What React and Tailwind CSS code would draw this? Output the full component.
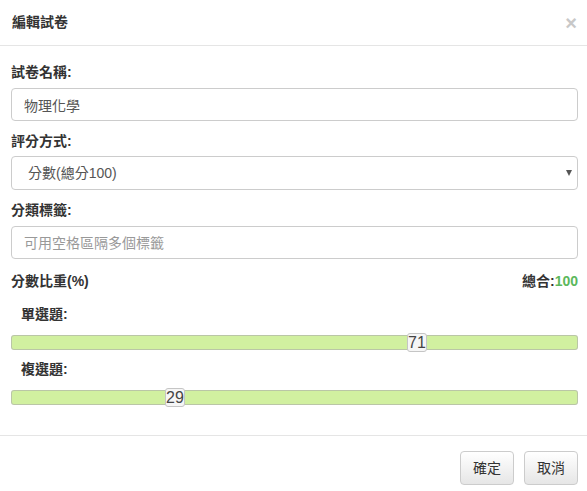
import { useState } from 'react';

const font = { fontFamily: '"Liberation Sans", Arial, "Noto Sans CJK TC", sans-serif' };

function Slider({ label, value, left }) {
  return (
    <div>
      <div className="pl-[10px] h-[20px] text-[14px] font-bold text-[#333] leading-[20px]">{label}:</div>
      <div className="relative mt-[11px] h-[15px] rounded-[3px] border border-[#aaa]/60 bg-[#d1f0a0]">
        <div
          className="absolute top-[-3px] h-[19px] w-[20px] rounded-[3px] border border-[#c5c5c5] bg-[#f6f6f6] text-center text-[16px] leading-[18px] text-[#454545]"
          style={{ left }}
        >
          {value}
        </div>
      </div>
    </div>
  );
}

export default function App() {
  const [name, setName] = useState('物理化學');
  const [tags, setTags] = useState('');

  return (
    <div className="w-[587px] h-[491px] bg-white text-[#333]" style={font}>
      {/* header */}
      <div className="flex h-[46px] items-center justify-between border-b border-[#e5e5e5] pl-[12px] pr-[10px]">
        <h4 className="text-[14px] font-bold text-[#333]">編輯試卷</h4>
        <span className="text-[20px] font-bold leading-none text-[#c8c8c8]">×</span>
      </div>

      {/* body */}
      <div className="pl-[11px] pr-[9px] pt-[16px]">
        <label className="block h-[20px] text-[14px] font-bold leading-[20px]">試卷名稱:</label>
        <input
          className="mt-[6px] block h-[33px] w-full rounded-[4px] border border-[#ccc] px-[12px] text-[14px] text-[#555] outline-none"
          value={name}
          onChange={e => setName(e.target.value)}
        />

        <label className="mt-[10px] block h-[20px] text-[14px] font-bold leading-[20px]">評分方式:</label>
        <div className="relative mt-[5px] flex h-[34px] items-center rounded-[4px] border border-[#ccc] pl-[16px] text-[14px] text-[#555]">
          分數(總分100)
          <span className="absolute right-[5px] top-[13px] h-0 w-0 border-x-[3.5px] border-t-[6px] border-x-transparent border-t-[#555]" />
        </div>

        <label className="mt-[10px] block h-[20px] text-[14px] font-bold leading-[20px]">分類標籤:</label>
        <input
          className="mt-[6px] block h-[33px] w-full rounded-[4px] border border-[#ccc] px-[12px] text-[14px] text-[#555] outline-none placeholder:text-[#999]"
          placeholder="可用空格區隔多個標籤"
          value={tags}
          onChange={e => setTags(e.target.value)}
        />

        <div className="mt-[12px] flex h-[20px] items-center justify-between text-[14px] font-bold">
          <span>分數比重(%)</span>
          <span>
            總合:<span className="text-[#5cb85c]">100</span>
          </span>
        </div>

        <div className="mt-[13px]">
          <Slider label="單選題" value={71} left={395} />
        </div>
        <div className="mt-[9px]">
          <Slider label="複選題" value={29} left={153} />
        </div>
      </div>

      {/* footer */}
      <div className="mt-[30px] flex justify-end gap-[10px] border-t border-[#e5e5e5] px-[9px] pt-[15px]">
        <button className="h-[34px] w-[54px] rounded-[4px] border border-[#ccc] bg-gradient-to-b from-white to-[#e6e6e6] text-[14px] text-[#333]">
          確定
        </button>
        <button className="h-[34px] w-[54px] rounded-[4px] border border-[#ccc] bg-gradient-to-b from-white to-[#e6e6e6] text-[14px] text-[#333]">
          取消
        </button>
      </div>
    </div>
  );
}
